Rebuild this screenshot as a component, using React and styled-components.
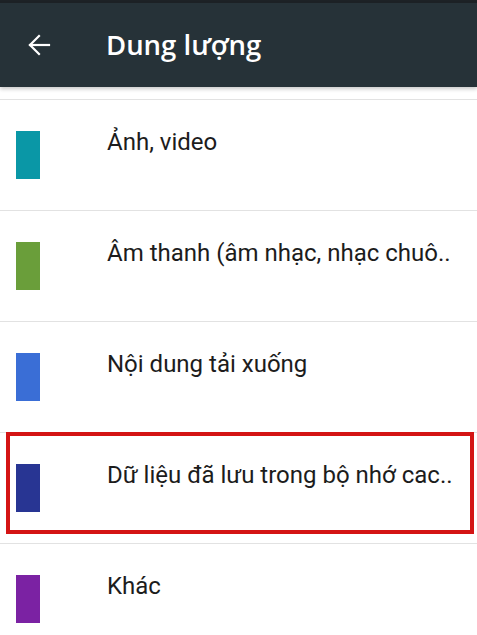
import React from "react";
import styled, { createGlobalStyle } from "styled-components";

const Global = createGlobalStyle`
  html, body { margin: 0; padding: 0; background: #ffffff; }
  body { font-family: Roboto, "Noto Sans", sans-serif; }
`;

const Screen = styled.div`
  width: 477px;
  height: 635px;
  overflow: hidden;
  background: #ffffff;
  position: relative;
`;

const StatusStrip = styled.div`
  height: 3px;
  background: #1d2226;
`;

const Toolbar = styled.header`
  height: 84px;
  background: #263238;
  display: flex;
  align-items: center;
  box-shadow: 0 2px 4px rgba(0, 0, 0, 0.22);
  position: relative;
  z-index: 1;
`;

const BackButton = styled.div`
  width: 106px;
  display: flex;
  padding-left: 27px;
  box-sizing: border-box;
  color: #ffffff;
`;

const Title = styled.h1`
  margin: -2px 0 0 0;
  font-family: "Open Sans", "Noto Sans", sans-serif;
  font-weight: 600;
  font-size: 27.5px;
  color: #ffffff;
`;

const List = styled.div`
  padding-top: 12px;
`;

const Row = styled.div`
  height: 82px;
  border-top: 1px solid #e2e2e2;
  display: flex;
  align-items: flex-start;
  padding: 28px 0 0 16px;
  position: relative;
`;

const Swatch = styled.div`
  width: 24px;
  height: 48px;
  margin-top: 3px;
  background: ${(p) => p.$color};
  flex: none;
`;

const Label = styled.div`
  margin-left: 67px;
  font-size: 24px;
  line-height: 28px;
  color: #1c1c1c;
  white-space: nowrap;
`;

const Highlight = styled.div`
  position: absolute;
  left: 6px;
  right: 3px;
  top: -1px;
  height: 102px;
  border: 4px solid #d41414;
  box-sizing: border-box;
  pointer-events: none;
`;

const items = [
  { color: "#0a97a6", label: "Ảnh, video" },
  { color: "#6a9e3a", label: "Âm thanh (âm nhạc, nhạc chuô.." },
  { color: "#3a6ed6", label: "Nội dung tải xuống" },
  { color: "#283593", label: "Dữ liệu đã lưu trong bộ nhớ cac..", highlight: true },
  { color: "#7b22a3", label: "Khác" },
];

export default function App() {
  return (
    <Screen>
      <Global />
      <StatusStrip />
      <Toolbar>
        <BackButton>
          <svg width="24" height="24" viewBox="0 0 24 24" fill="none" stroke="#ffffff" strokeWidth="2.2" strokeLinecap="square">
            <path d="M22 12H3" />
            <path d="M12 3l-9 9 9 9" />
          </svg>
        </BackButton>
        <Title>Dung lượng</Title>
      </Toolbar>
      <List>
        {items.map((it) => (
          <Row key={it.label}>
            <Swatch $color={it.color} />
            <Label>{it.label}</Label>
            {it.highlight && <Highlight />}
          </Row>
        ))}
      </List>
    </Screen>
  );
}
